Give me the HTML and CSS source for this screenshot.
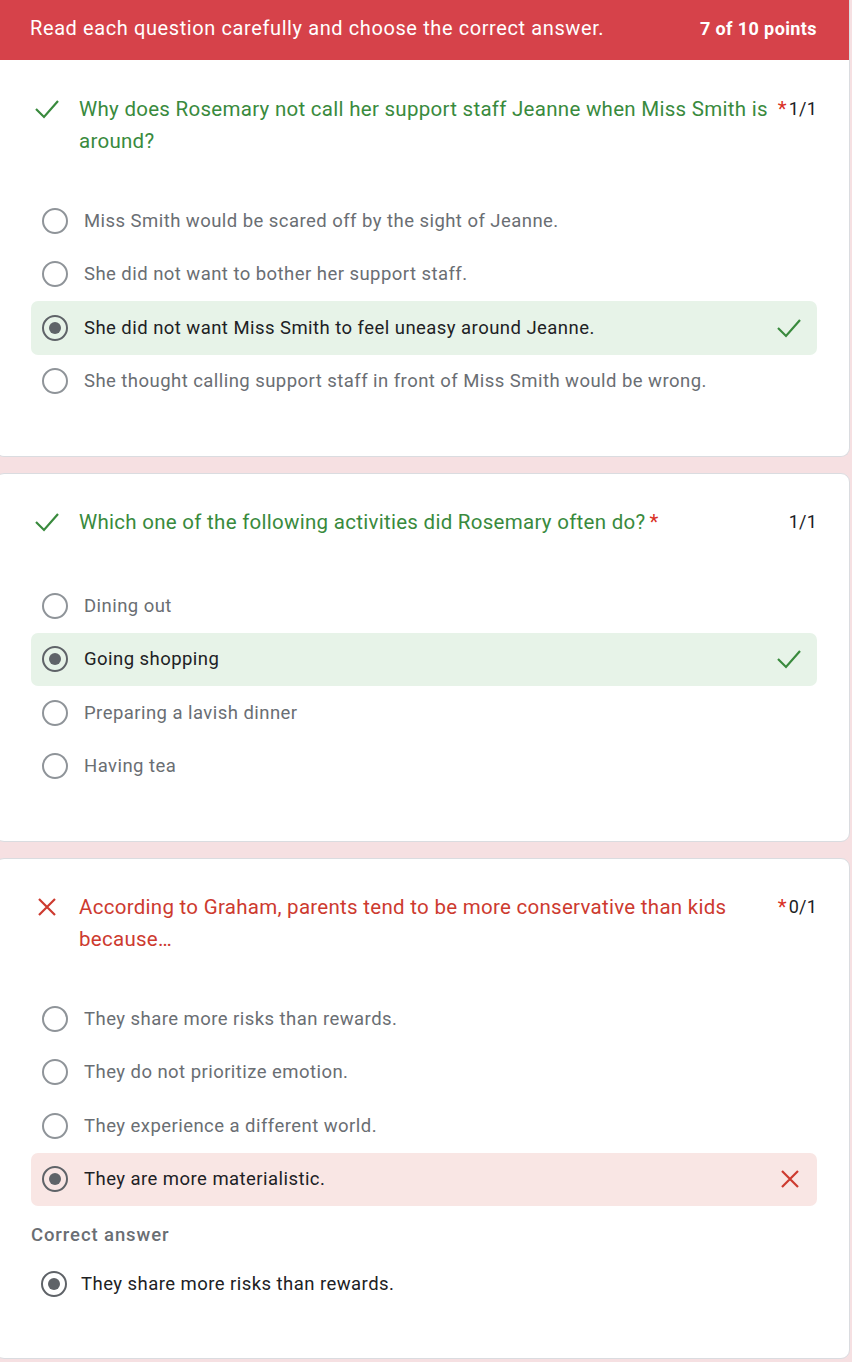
FILE: index.html
```html
<!DOCTYPE html>
<html lang="en">
<head>
<meta charset="utf-8">
<title>Quiz results</title>
<link rel="stylesheet" href="styles.css">
</head>
<body>
<main class="page">
  <section class="card first">
    <header class="banner">
      <span class="banner-text">Read each question carefully and choose the correct answer.</span>
      <span class="banner-score">7 of 10 points</span>
    </header>
    <div class="card-body">
      <div class="q-head correct">
        <span class="q-icon"><svg width="26" height="20" viewBox="0 0 26 20"><polyline points="2,10 10,18 24,2" fill="none" stroke="currentColor" stroke-width="2.2"/></svg></span>
        <span class="q-title">Why does Rosemary not call her support staff Jeanne when Miss Smith is around?</span>
        <span class="req">*</span>
        <span class="q-points">1/1</span>
      </div>
      <ul class="options">
        <li class="opt"><span class="radio"></span><span class="opt-text">Miss Smith would be scared off by the sight of Jeanne.</span></li>
        <li class="opt"><span class="radio"></span><span class="opt-text">She did not want to bother her support staff.</span></li>
        <li class="opt chosen right"><span class="radio on"></span><span class="opt-text">She did not want Miss Smith to feel uneasy around Jeanne.</span><span class="mark ok"><svg width="26" height="20" viewBox="0 0 26 20"><polyline points="2,10 10,18 24,2" fill="none" stroke="currentColor" stroke-width="2.2"/></svg></span></li>
        <li class="opt"><span class="radio"></span><span class="opt-text">She thought calling support staff in front of Miss Smith would be wrong.</span></li>
      </ul>
    </div>
  </section>

  <section class="card">
    <div class="card-body">
      <div class="q-head correct">
        <span class="q-icon"><svg width="26" height="20" viewBox="0 0 26 20"><polyline points="2,10 10,18 24,2" fill="none" stroke="currentColor" stroke-width="2.2"/></svg></span>
        <span class="q-title">Which one of the following activities did Rosemary often do?</span>
        <span class="req">*</span>
        <span class="q-points">1/1</span>
      </div>
      <ul class="options">
        <li class="opt"><span class="radio"></span><span class="opt-text">Dining out</span></li>
        <li class="opt chosen right"><span class="radio on"></span><span class="opt-text">Going shopping</span><span class="mark ok"><svg width="26" height="20" viewBox="0 0 26 20"><polyline points="2,10 10,18 24,2" fill="none" stroke="currentColor" stroke-width="2.2"/></svg></span></li>
        <li class="opt"><span class="radio"></span><span class="opt-text">Preparing a lavish dinner</span></li>
        <li class="opt"><span class="radio"></span><span class="opt-text">Having tea</span></li>
      </ul>
    </div>
  </section>

  <section class="card">
    <div class="card-body last">
      <div class="q-head wrong">
        <span class="q-icon"><svg width="20" height="20" viewBox="0 0 20 20"><path d="M2 2 L18 18 M18 2 L2 18" fill="none" stroke="currentColor" stroke-width="2.2"/></svg></span>
        <span class="q-title">According to Graham, parents tend to be more conservative than kids because…</span>
        <span class="req">*</span>
        <span class="q-points">0/1</span>
      </div>
      <ul class="options">
        <li class="opt"><span class="radio"></span><span class="opt-text">They share more risks than rewards.</span></li>
        <li class="opt"><span class="radio"></span><span class="opt-text">They do not prioritize emotion.</span></li>
        <li class="opt"><span class="radio"></span><span class="opt-text">They experience a different world.</span></li>
        <li class="opt chosen bad"><span class="radio on"></span><span class="opt-text">They are more materialistic.</span><span class="mark no"><svg width="20" height="20" viewBox="0 0 20 20"><path d="M2 2 L18 18 M18 2 L2 18" fill="none" stroke="currentColor" stroke-width="2.2"/></svg></span></li>
      </ul>
      <div class="answer-label">Correct answer</div>
      <div class="opt answer"><span class="radio on"></span><span class="opt-text">They share more risks than rewards.</span></div>
    </div>
  </section>
</main>
</body>
</html>
```

FILE: styles.css
```css
* { box-sizing: border-box; }

html, body {
  margin: 0;
  padding: 0;
  background: #f6e0e2;
}

body {
  font-family: Roboto, "Noto Sans", "Liberation Sans", sans-serif;
  color: #202124;
}

.page {
  width: 855px;
  margin-left: -5px;
  display: flex;
  flex-direction: column;
  gap: 16px;
  padding-bottom: 4px;
}

.card {
  background: #fff;
  border: 1px solid #dadce0;
  border-radius: 9px;
  overflow: hidden;
}

.card.first {
  border-top: none;
  border-radius: 0 0 9px 9px;
}

.banner {
  background: #d6424a;
  color: #fff;
  height: 60px;
  display: flex;
  align-items: center;
  justify-content: space-between;
  padding: 0 32px 4px 34px;
}

.banner-text {
  font-size: 20px;
  letter-spacing: 0.6px;
}

.banner-score {
  font-size: 18px;
  font-weight: 700;
  letter-spacing: 0.4px;
}

.card-body {
  padding: 32px 32px 48px 35px;
}

.card.first .card-body {
  padding-top: 33px;
}

.card-body.last {
  padding-bottom: 47px;
}

.q-head {
  display: flex;
  align-items: flex-start;
  min-height: 36px;
  font-size: 20.5px;
  letter-spacing: 0.28px;
  line-height: 32px;
}

.q-head.correct { color: #398a3d; }
.q-head.wrong { color: #cd3a2f; }

.q-icon {
  width: 48px;
  flex: none;
  display: flex;
  align-items: center;
  height: 32px;
  padding-left: 3px;
}

.q-head.wrong .q-icon { padding-left: 6px; }

.q-title {
  flex: 0 1 auto;
}

.req {
  color: #d93025;
  margin-left: 4px;
  flex: none;
}

.q-points {
  margin-left: auto;
  padding-left: 2px;
  flex: none;
  color: #202124;
  font-size: 18px;
  letter-spacing: 0.2px;
}

.options {
  list-style: none;
  margin: 0;
  padding: 0;
  margin-top: 37px;
}

.opt {
  display: flex;
  align-items: center;
  height: 53.5px;
  padding: 0 15px 0 11px;
  font-size: 18.5px;
  letter-spacing: 0.45px;
  color: #6a6e73;
  border-radius: 7px;
}

.radio {
  width: 26px;
  height: 26px;
  border: 2px solid #8f9499;
  border-radius: 50%;
  flex: none;
  margin-right: 16px;
  display: flex;
  align-items: center;
  justify-content: center;
}

.radio.on {
  border-color: #5f6368;
}

.radio.on::after {
  content: "";
  width: 12px;
  height: 12px;
  border-radius: 50%;
  background: #5f6368;
}

.opt.chosen .opt-text,
.opt.answer .opt-text {
  color: #202124;
}

.opt.right { background: #e7f3e8; }
.opt.bad { background: #f9e6e4; }

.mark {
  margin-left: auto;
  display: flex;
  align-items: center;
}

.mark.ok { color: #398a3d; }
.mark.no { color: #cd3a2f; margin-right: 2px; }

.answer-label {
  font-size: 18.5px;
  font-weight: 500;
  letter-spacing: 0.9px;
  color: #6a6e73;
  margin-top: 17px;
  line-height: 24px;
}

.opt.answer {
  margin-top: 10px;
  padding-left: 10px;
}

.opt.answer .radio {
  margin-right: 14px;
}
```
